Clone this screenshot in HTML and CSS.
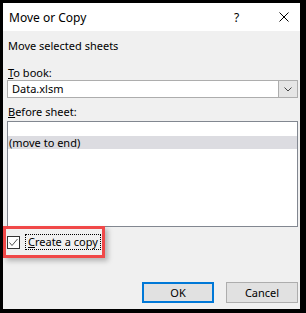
FILE: index.html
```html
<!DOCTYPE html>
<html lang="en">
<head>
    <meta charset="UTF-8">
    <title>Move or Copy</title>
    <link rel="stylesheet" href="styles.css">
</head>
<body>
    <div class="dialog">
        <div class="titlebar">
            <span class="title">Move or Copy</span>
            <span class="help">?</span>
            <svg class="close" width="10" height="10" viewBox="0 0 10 10">
                <path d="M0.5 0.5 L9.5 9.5 M9.5 0.5 L0.5 9.5" stroke="#000" stroke-width="1" fill="none"/>
            </svg>
        </div>
        <div class="content">
            <p class="line">Move selected sheets</p>
            <p class="label to-book"><u>T</u>o book:</p>
            <div class="combo">
                <span class="combo-text">Data.xlsm</span>
                <span class="combo-btn">
                    <svg width="8" height="5" viewBox="0 0 8 5">
                        <path d="M0.5 0.5 L4 4 L7.5 0.5" stroke="#444" stroke-width="1" fill="none"/>
                    </svg>
                </span>
            </div>
            <p class="label before"><u>B</u>efore sheet:</p>
            <div class="listbox">
                <div class="list-row selected">(move to end)</div>
            </div>
            <div class="highlight">
                <span class="checkbox">
                    <svg width="11" height="11" viewBox="0 0 11 11">
                        <path d="M1.5 5.5 L4 8.5 L9.5 2" stroke="#555" stroke-width="1" fill="none"/>
                    </svg>
                </span>
                <span class="check-label"><u>C</u>reate a copy</span>
            </div>
            <div class="buttons">
                <button class="button default">OK</button>
                <button class="button">Cancel</button>
            </div>
        </div>
    </div>
</body>
</html>
```

FILE: styles.css
```css
* {
    margin: 0;
    padding: 0;
    box-sizing: border-box;
    font-family: 'Noto Sans', 'Liberation Sans', sans-serif;
}
body {
    background-color: #000;
    width: 306px;
    height: 313px;
    overflow: hidden;
}
.dialog {
    margin: 3px 0 0 3px;
    width: 297px;
    height: 306px;
    background: #f0f0f0;
    display: flex;
    flex-direction: column;
}
.titlebar {
    height: 28px;
    background: #fff;
    display: flex;
    align-items: center;
    font-size: 12px;
    color: #000;
}
.title {
    margin-left: 6px;
    flex: 1;
}
.help {
    width: 8px;
    margin-right: 37px;
    font-size: 12px;
}
.close {
    margin-right: 11px;
}
.content {
    flex: 1;
    display: flex;
    flex-direction: column;
    padding: 8px 2px 6px 5px;
    font-size: 11px;
    color: #000;
    white-space: nowrap;
}
.line,
.label {
    line-height: 14px;
    height: 14px;
}
.to-book {
    margin-top: 13px;
}
.combo {
    height: 18px;
    display: flex;
    margin-left: -1px;
    border: 1px solid #adadad;
    background: #fff;
}
.combo-text {
    flex: 1;
    padding-left: 4px;
    line-height: 16px;
}
.combo-btn {
    width: 19px;
    background: #e5e5e5;
    border-left: 1px solid #adadad;
    display: flex;
    align-items: center;
    justify-content: center;
}
.before {
    margin-top: 7px;
}
.listbox {
    margin-top: 2px;
    margin-left: -1px;
    height: 106px;
    border: 1px solid #828790;
    background: #fff;
    padding-top: 14px;
}
.list-row {
    height: 13px;
    line-height: 13px;
    padding-left: 1px;
}
.selected {
    background: #dcdce1;
}
.highlight {
    margin: -1px 0 0 -5px;
    width: 102px;
    height: 32px;
    border: 3px solid #f04848;
    box-shadow: 3px 3px 5px rgba(0, 0, 0, 0.25);
    display: flex;
    align-items: center;
    padding-left: 1px;
}
.checkbox {
    width: 13px;
    height: 13px;
    border: 1px solid #333;
    background: #fff;
    display: flex;
    align-items: center;
    justify-content: center;
}
.check-label {
    margin-left: 5px;
    height: 16px;
    line-height: 14px;
    padding: 0 2px;
    border: 1px dotted #000;
}
.buttons {
    margin-top: auto;
    display: flex;
    justify-content: flex-end;
    gap: 12px;
}
.button {
    width: 72px;
    height: 21px;
    font-size: 11px;
    background: #e1e1e1;
    border: 1px solid #adadad;
    color: #000;
}
.button.default {
    border: 2px solid #0078d7;
}
```
